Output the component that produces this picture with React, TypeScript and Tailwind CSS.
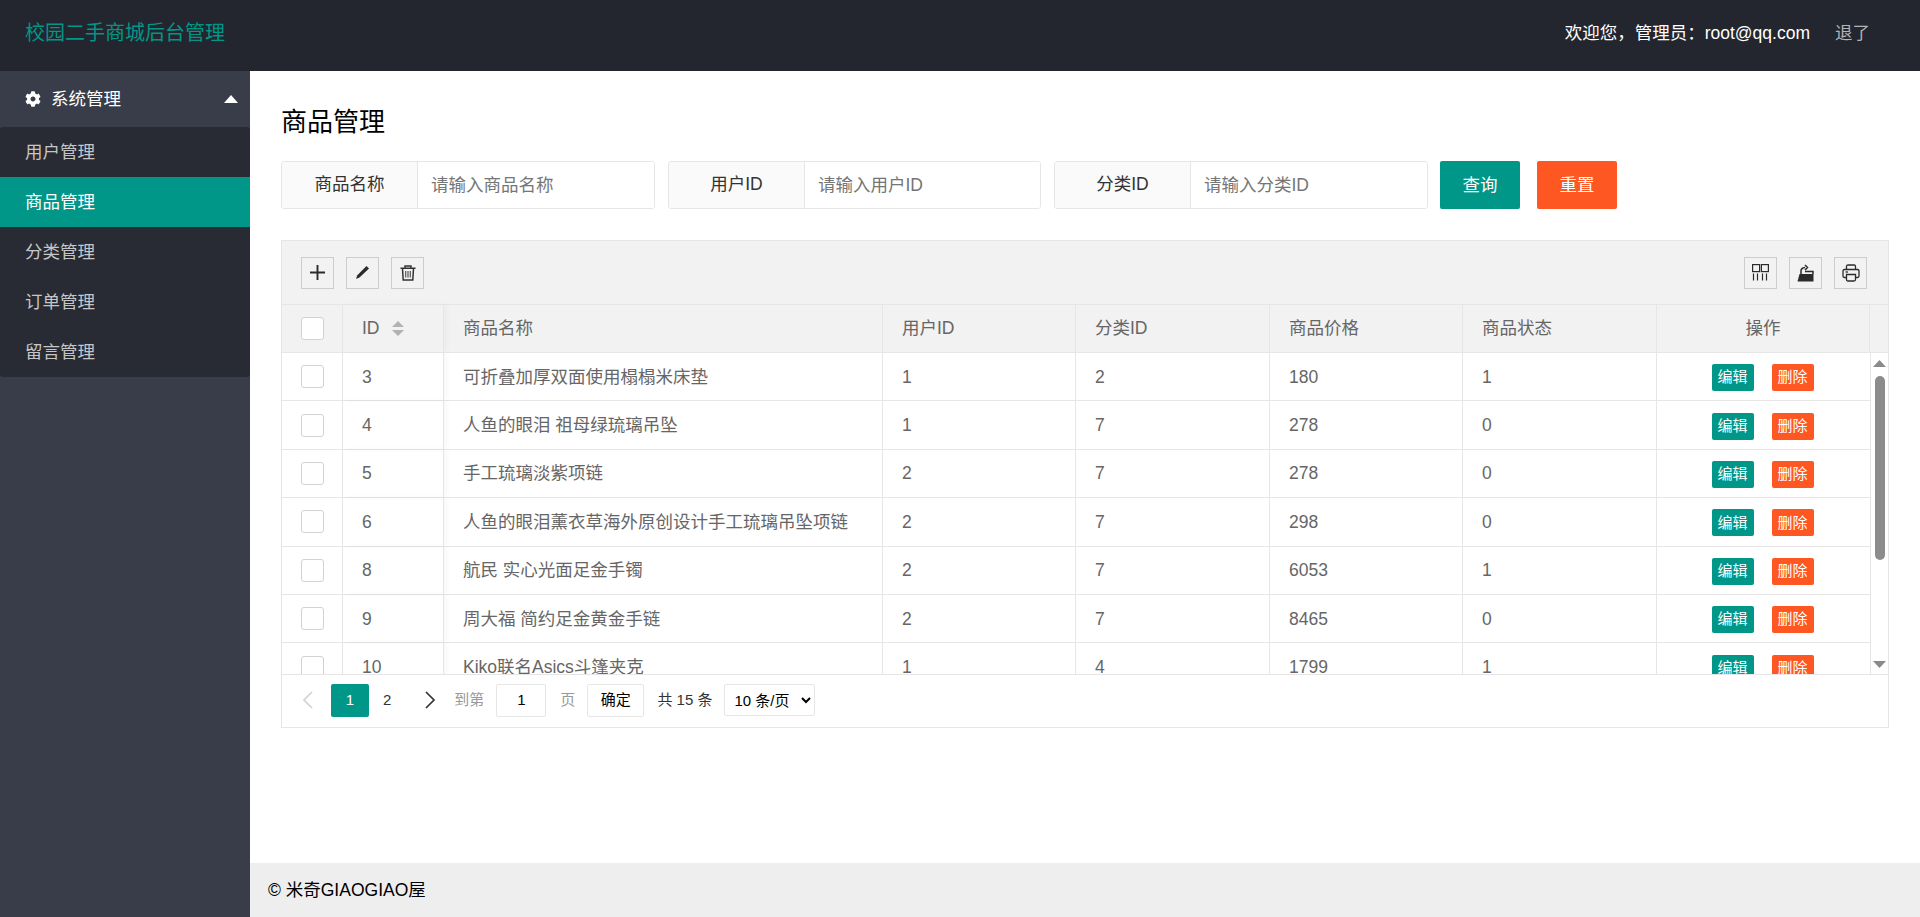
import React from "react";
import { FaCog } from "react-icons/fa";

const rows = [
  ["3", "可折叠加厚双面使用榻榻米床垫", "1", "2", "180", "1"],
  ["4", "人鱼的眼泪 祖母绿琉璃吊坠", "1", "7", "278", "0"],
  ["5", "手工琉璃淡紫项链", "2", "7", "278", "0"],
  ["6", "人鱼的眼泪薰衣草海外原创设计手工琉璃吊坠项链", "2", "7", "298", "0"],
  ["8", "航民 实心光面足金手镯", "2", "7", "6053", "1"],
  ["9", "周大福 简约足金黄金手链", "2", "7", "8465", "0"],
  ["10", "Kiko联名Asics斗篷夹克", "1", "4", "1799", "1"],
];

const navItems = ["用户管理", "商品管理", "分类管理", "订单管理", "留言管理"];

function SearchField({ label, placeholder, width }: { label: string; placeholder: string; width: string }) {
  return (
    <div className={`flex h-[48px] overflow-hidden rounded-[3px] border border-[#e6e6e6] ${width}`}>
      <div className="flex w-[136px] shrink-0 items-center justify-center border-r border-[#e6e6e6] bg-[#fafafa] pb-[2px] text-[#333333]">
        {label}
      </div>
      <input
        placeholder={placeholder}
        className="min-w-0 flex-1 bg-white px-[13px] text-[#333333] outline-none placeholder:text-[#757575]"
      />
    </div>
  );
}

function ToolButton({ children }: { children: React.ReactNode }) {
  return (
    <div className="flex h-[32px] w-[33px] items-center justify-center border border-[#cccccc]">{children}</div>
  );
}

function Checkbox() {
  return <div className="h-[23px] w-[23px] rounded-[3px] border border-[#d2d2d2] bg-white" />;
}

function ActionButton({ label, color }: { label: string; color: string }) {
  return (
    <div className={`flex h-[27px] w-[42px] items-center justify-center rounded-[2px] text-[15px] text-white ${color}`}>
      {label}
    </div>
  );
}

export default function App() {
  return (
    <div className="flex h-[917px] w-[1920px] flex-col overflow-hidden bg-white font-['Liberation_Sans','Noto_Sans_CJK_SC',sans-serif] text-[17.5px] text-[#666666]">
      <header className="flex h-[71px] shrink-0 items-center justify-between bg-[#23262e] pl-[25px] pr-[50px]">
        <div className="pb-[5px] text-[20px] text-[#009688]">校园二手商城后台管理</div>
        <div className="flex items-center gap-[25px] pb-[4px]">
          <span className="text-white">欢迎您，管理员：root@qq.com</span>
          <span className="text-[#b4b4b4]">退了</span>
        </div>
      </header>

      <div className="flex min-h-0 flex-1">
        <aside className="w-[250px] shrink-0 bg-[#393d49]">
          <div className="relative flex h-[56px] items-center pl-[25px] pr-[12px] text-white">
            <FaCog className="h-[16px] w-[16px]" />
            <span className="ml-[10px] flex-1">系统管理</span>
            <svg width="14" height="8" viewBox="0 0 14 8" className="text-white">
              <path d="M0 8 L7 0 L14 8 Z" fill="currentColor" />
            </svg>
          </div>
          <div className="rounded-[3px] bg-[#282b33]">
            {navItems.map((n) => (
              <div
                key={n}
                className={`flex h-[50px] items-center pl-[25px] ${
                  n === "商品管理" ? "bg-[#009688] text-white" : "text-[#c6c6c6]"
                }`}
              >
                {n}
              </div>
            ))}
          </div>
        </aside>

        <div className="flex min-w-0 flex-1 flex-col">
          <main className="min-h-0 flex-1 pl-[31px] pr-[31px]">
            <h1 className="flex h-[90px] items-end pb-[21px] text-[26px] leading-[36px] text-black">商品管理</h1>
            <div className="flex items-center">
              <SearchField label="商品名称" placeholder="请输入商品名称" width="w-[374px]" />
              <div className="ml-[13px]">
                <SearchField label="用户ID" placeholder="请输入用户ID" width="w-[373px]" />
              </div>
              <div className="ml-[13px]">
                <SearchField label="分类ID" placeholder="请输入分类ID" width="w-[374px]" />
              </div>
              <div className="ml-[12px] flex h-[48px] w-[80px] items-center justify-center rounded-[2px] bg-[#009688] text-white">查询</div>
              <div className="ml-[17px] flex h-[48px] w-[80px] items-center justify-center rounded-[2px] bg-[#ff5722] text-white">重置</div>
            </div>

            <div className="mt-[31px] border border-[#e6e6e6]">
              <div className="flex h-[64px] items-center justify-between border-b border-[#e6e6e6] bg-[#f2f2f2] pl-[19px] pr-[21px] text-[#333333]">
                <div className="flex gap-[12px]">
                  <ToolButton>
                    <svg width="17" height="17" viewBox="0 0 17 17">
                      <path d="M1 8.5 H16 M8.5 1 V16" stroke="#2b2b2b" strokeWidth="1.9" />
                    </svg>
                  </ToolButton>
                  <ToolButton>
                    <svg width="15" height="15" viewBox="0 0 15 15">
                      <path d="M11.5 1 L14 3.5 L4.5 12.5 L1 14 L2.3 10.2 Z" fill="#2b2b2b" />
                    </svg>
                  </ToolButton>
                  <ToolButton>
                    <svg width="16" height="16" viewBox="0 0 16 16" fill="none">
                      <path d="M0.5 3.2 H15.5 M5 3 V1 H11 V3" stroke="#333333" strokeWidth="1.4" />
                      <path d="M2.5 3.5 L3.2 15 H12.8 L13.5 3.5" stroke="#333333" strokeWidth="1.5" />
                      <path d="M5.7 6 V12.5 M8 6 V12.5 M10.3 6 V12.5" stroke="#555555" strokeWidth="1.2" />
                    </svg>
                  </ToolButton>
                </div>
                <div className="flex gap-[12px]">
                  <ToolButton>
                    <svg width="17" height="17" viewBox="0 0 17 17" fill="none" stroke="#2b2b2b" strokeWidth="1.2">
                      <rect x="0.6" y="0.6" width="7" height="7" />
                      <rect x="9.4" y="0.6" width="7" height="7" />
                      <path d="M1.5 9.5 V16.5 M5.5 9.5 V16.5 M10.5 9.5 V16.5 M14.5 9.5 V16.5" />
                    </svg>
                  </ToolButton>
                  <ToolButton>
                    <svg width="17" height="18" viewBox="0 0 17 18">
                      <path d="M2.5 10 H16.5 V17.5 H0.5 Z" fill="#2b2b2b" />
                      <path d="M4 10 V7 Q4 4 8 3.5 M8 1 L10.5 3.5 L8 6 M8 7.5 H16 V10" fill="none" stroke="#2b2b2b" strokeWidth="1.5" />
                    </svg>
                  </ToolButton>
                  <ToolButton>
                    <svg width="18" height="18" viewBox="0 0 18 18" fill="none" stroke="#2b2b2b" strokeWidth="1.3">
                      <path d="M4.5 5.5 V2.5 Q4.5 1 6 1 H12 Q13.5 1 13.5 2.5 V5.5" />
                      <path d="M4.5 13.5 H2.5 Q1 13.5 1 12 V7 Q1 5.5 2.5 5.5 H15.5 Q17 5.5 17 7 V12 Q17 13.5 15.5 13.5 H13.5" />
                      <path d="M4.5 10.5 H13.5 V15.5 Q13.5 17 12 17 H6 Q4.5 17 4.5 15.5 Z" />
                      <path d="M3.5 8 H6" />
                    </svg>
                  </ToolButton>
                </div>
              </div>

              <div className="flex h-[48px] border-b border-[#e6e6e6] bg-[#f2f2f2]">
                <div className="flex w-[61px] shrink-0 items-center justify-center border-r border-[#e6e6e6]">
                  <Checkbox />
                </div>
                <div className="flex w-[101px] shrink-0 items-center gap-[12px] border-r border-[#e6e6e6] pl-[19px] shadow-[3px_0_6px_rgba(0,0,0,0.03)]">
                  <span>ID</span>
                  <svg width="12" height="15" viewBox="0 0 12 15">
                    <path d="M0 6 L6 0 L12 6 Z M0 9 L6 15 L12 9 Z" fill="#b2b2b2" />
                  </svg>
                </div>
                <div className="flex w-[439px] shrink-0 items-center border-r border-[#e6e6e6] pl-[19px]">商品名称</div>
                <div className="flex w-[193px] shrink-0 items-center border-r border-[#e6e6e6] pl-[19px]">用户ID</div>
                <div className="flex w-[194px] shrink-0 items-center border-r border-[#e6e6e6] pl-[19px]">分类ID</div>
                <div className="flex w-[193px] shrink-0 items-center border-r border-[#e6e6e6] pl-[19px]">商品价格</div>
                <div className="flex w-[194px] shrink-0 items-center border-r border-[#e6e6e6] pl-[19px]">商品状态</div>
                <div className="flex w-[213px] shrink-0 items-center justify-center border-r border-[#e6e6e6]">操作</div>
                <div className="flex-1" />
              </div>

              <div className="flex h-[322px] border-b border-[#e6e6e6]">
                <div className="min-w-0 flex-1 overflow-hidden">
                  {rows.map((r) => (
                    <div key={r[0]} className="flex h-[48.4px] border-b border-[#e6e6e6]">
                      <div className="flex w-[61px] shrink-0 items-center justify-center border-r border-[#e6e6e6]">
                        <Checkbox />
                      </div>
                      <div className="flex w-[101px] shrink-0 items-center border-r border-[#e6e6e6] pl-[19px] shadow-[3px_0_6px_rgba(0,0,0,0.03)]">{r[0]}</div>
                      <div className="flex w-[439px] shrink-0 items-center border-r border-[#e6e6e6] pl-[19px]">{r[1]}</div>
                      <div className="flex w-[193px] shrink-0 items-center border-r border-[#e6e6e6] pl-[19px]">{r[2]}</div>
                      <div className="flex w-[194px] shrink-0 items-center border-r border-[#e6e6e6] pl-[19px]">{r[3]}</div>
                      <div className="flex w-[193px] shrink-0 items-center border-r border-[#e6e6e6] pl-[19px]">{r[4]}</div>
                      <div className="flex w-[194px] shrink-0 items-center border-r border-[#e6e6e6] pl-[19px]">{r[5]}</div>
                      <div className="flex flex-1 items-center justify-center gap-[18px] pr-[2px] pt-[2px]">
                        <ActionButton label="编辑" color="bg-[#009688]" />
                        <ActionButton label="删除" color="bg-[#ff5722]" />
                      </div>
                    </div>
                  ))}
                </div>
                <div className="flex w-[18px] shrink-0 flex-col items-center justify-between border-l border-[#e6e6e6] pb-[6px] pt-[7px]">
                  <svg width="13" height="7" viewBox="0 0 13 7">
                    <path d="M0 7 L6.5 0 L13 7 Z" fill="#8a8a8a" />
                  </svg>
                  <div className="-mt-[2px] mb-[90px] h-[184px] w-[10px] rounded-[5px] bg-[#8c8c8c]" />
                  <svg width="13" height="7" viewBox="0 0 13 7">
                    <path d="M0 0 L6.5 7 L13 0 Z" fill="#8a8a8a" />
                  </svg>
                </div>
              </div>

              <div className="flex h-[52px] items-center pb-[2px] pl-[17px] text-[15px]">
                <svg width="14" height="18" viewBox="0 0 14 18" className="ml-[2px]" fill="none" stroke="#d2d2d2" strokeWidth="1.7">
                  <path d="M11 1 L3 9 L11 17" />
                </svg>
                <div className="ml-[16px] flex h-[33px] w-[38px] items-center justify-center rounded-[2px] bg-[#009688] text-white">1</div>
                <span className="ml-[14px] text-[#333333]">2</span>
                <svg width="14" height="18" viewBox="0 0 14 18" className="ml-[32px]" fill="none" stroke="#333333" strokeWidth="1.7">
                  <path d="M3 1 L11 9 L3 17" />
                </svg>
                <span className="ml-[17px] text-[#999999]">到第</span>
                <div className="ml-[12px] flex h-[33px] w-[50px] items-center justify-center rounded-[2px] border border-[#e6e6e6] text-black">1</div>
                <span className="ml-[14px] text-[#999999]">页</span>
                <div className="ml-[12px] flex h-[33px] w-[57px] items-center justify-center rounded-[2px] border border-[#e6e6e6] text-black">确定</div>
                <span className="ml-[13px] text-[#333333]">共 15 条</span>
                <select className="ml-[12px] h-[32px] w-[91px] rounded-[2px] border border-[#e6e6e6] pl-[5px] text-black outline-none">
                  <option>10 条/页</option>
                </select>
              </div>
            </div>
          </main>
          <footer className="flex h-[54px] shrink-0 items-center bg-[#eeeeee] pl-[18px] text-black">© 米奇GIAOGIAO屋</footer>
        </div>
      </div>
    </div>
  );
}
